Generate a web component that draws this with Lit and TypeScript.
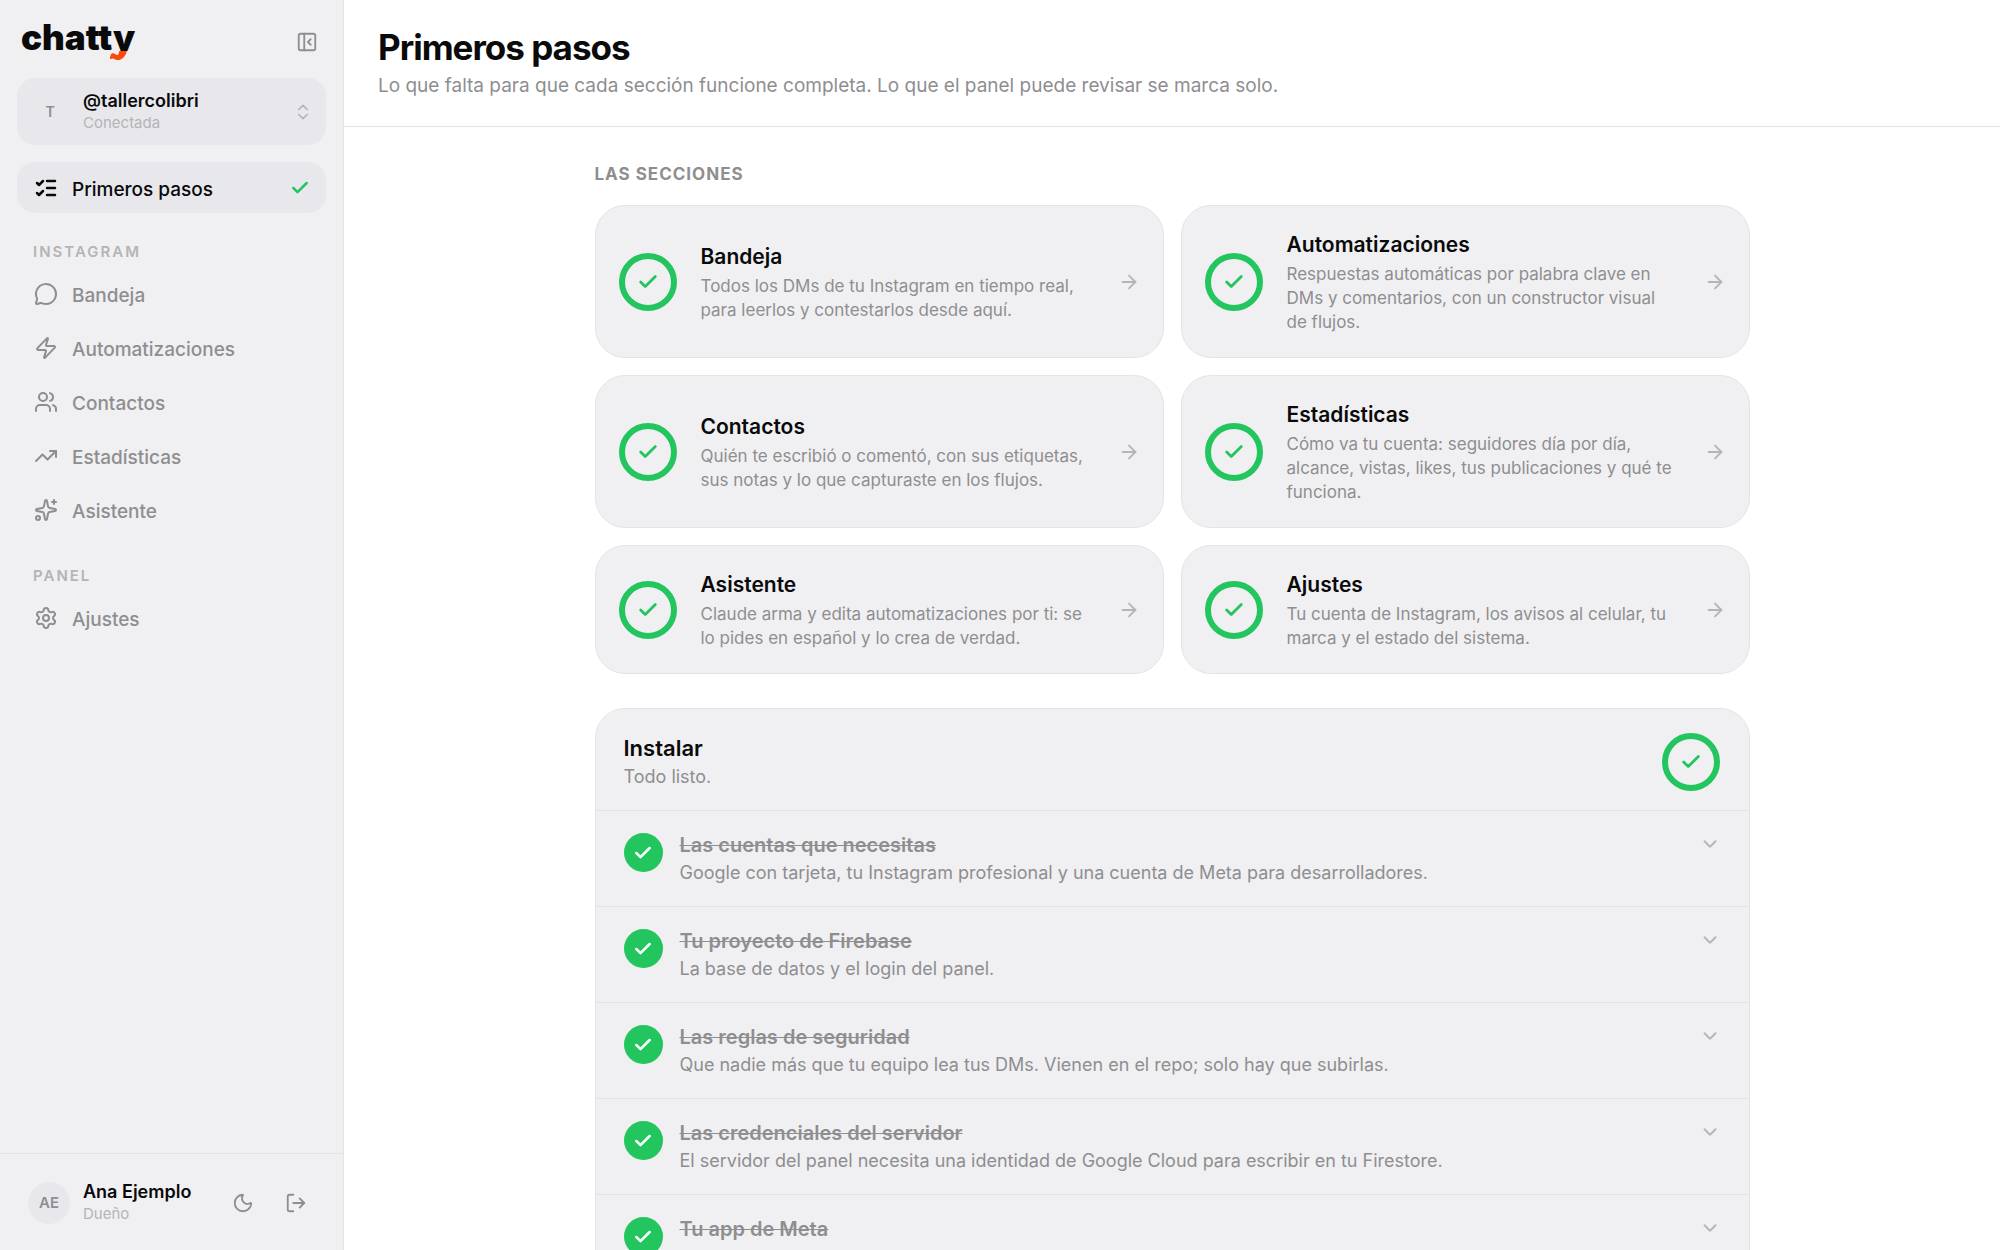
import { LitElement, html, css, svg } from "lit";
import { customElement, state } from "lit/decorators.js";

const icons = {
  panelClose: svg`<rect width="18" height="18" x="3" y="3" rx="2"/><path d="M9 3v18"/><path d="m16 15-3-3 3-3"/>`,
  upDown: svg`<path d="m7 15 5 5 5-5"/><path d="m7 9 5-5 5 5"/>`,
  checklist: svg`<path d="M13 5h8"/><path d="M13 12h8"/><path d="M13 19h8"/><path d="m3 17 2 2 4-4"/><path d="m3 7 2 2 4-4"/>`,
  check: svg`<path d="M20 6 9 17l-5-5"/>`,
  message: svg`<path d="M2.992 16.342a2 2 0 0 1 .094 1.167l-1.065 3.29a1 1 0 0 0 1.236 1.168l3.413-.998a2 2 0 0 1 1.099.092 10 10 0 1 0-4.777-4.719"/>`,
  bolt: svg`<path d="M4 14a1 1 0 0 1-.78-1.63l9.9-10.2a.5.5 0 0 1 .86.46l-1.92 6.02A1 1 0 0 0 13 10h7a1 1 0 0 1 .78 1.63l-9.9 10.2a.5.5 0 0 1-.86-.46l1.92-6.02A1 1 0 0 0 11 14z"/>`,
  users: svg`<path d="M16 21v-2a4 4 0 0 0-4-4H6a4 4 0 0 0-4 4v2"/><circle cx="9" cy="7" r="4"/><path d="M16 3.128a4 4 0 0 1 0 7.744"/><path d="M22 21v-2a4 4 0 0 0-3-3.87"/>`,
  trend: svg`<path d="M16 7h6v6"/><path d="m22 7-8.500 8.500-5-5L2 17"/>`,
  sparkles: svg`<path d="M11.017 2.814a1 1 0 0 1 1.966 0l1.051 5.558a2 2 0 0 0 1.594 1.594l5.558 1.051a1 1 0 0 1 0 1.966l-5.558 1.051a2 2 0 0 0-1.594 1.594l-1.051 5.558a1 1 0 0 1-1.966 0l-1.051-5.558a2 2 0 0 0-1.594-1.594l-5.558-1.051a1 1 0 0 1 0-1.966l5.558-1.051a2 2 0 0 0 1.594-1.594z"/><path d="M20 2v4"/><path d="M22 4h-4"/><circle cx="4" cy="20" r="2"/>`,
  gear: svg`<path d="M9.671 4.136a2.340 2.340 0 0 1 4.659 0 2.340 2.340 0 0 0 3.319 1.915 2.340 2.340 0 0 1 2.330 4.033 2.340 2.340 0 0 0 0 3.831 2.340 2.340 0 0 1-2.330 4.033 2.340 2.340 0 0 0-3.319 1.915 2.340 2.340 0 0 1-4.659 0 2.340 2.340 0 0 0-3.320-1.915 2.340 2.340 0 0 1-2.330-4.033 2.340 2.340 0 0 0 0-3.831A2.340 2.340 0 0 1 6.350 6.051a2.340 2.340 0 0 0 3.319-1.915"/><circle cx="12" cy="12" r="3"/>`,
  moon: svg`<path d="M20.985 12.486a9 9 0 1 1-9.473-9.472c.405-.022.617.460.402.803a6 6 0 0 0 8.268 8.268c.344-.215.825-.004.803.401"/>`,
  logout: svg`<path d="m16 17 5-5-5-5"/><path d="M21 12H9"/><path d="M9 21H5a2 2 0 0 1-2-2V5a2 2 0 0 1 2-2h4"/>`,
  arrow: svg`<path d="M5 12h14"/><path d="m12 5 7 7-7 7"/>`,
  down: svg`<path d="m6 9 6 6 6-6"/>`,
};
type IconName = keyof typeof icons;

const icon = (name: IconName, cls = "") =>
  html`<svg class="icon ${cls}" viewBox="0 0 24 24" aria-hidden="true">${icons[name]}</svg>`;

const ring = () => html`
  <span class="ring" role="img" aria-label="Completo">${icon("check", "i22 bold")}</span>`;

interface NavItem { label: string; icon: IconName }

const navGroups: { title: string; items: NavItem[] }[] = [
  {
    title: "Instagram",
    items: [
      { label: "Bandeja", icon: "message" },
      { label: "Automatizaciones", icon: "bolt" },
      { label: "Contactos", icon: "users" },
      { label: "Estadísticas", icon: "trend" },
      { label: "Asistente", icon: "sparkles" },
    ],
  },
  { title: "Panel", items: [{ label: "Ajustes", icon: "gear" }] },
];

const sections = [
  { title: "Bandeja", text: "Todos los DMs de tu Instagram en tiempo real, para leerlos y contestarlos desde aquí." },
  { title: "Automatizaciones", text: "Respuestas automáticas por palabra clave en DMs y comentarios, con un constructor visual de flujos." },
  { title: "Contactos", text: "Quién te escribió o comentó, con sus etiquetas, sus notas y lo que capturaste en los flujos." },
  { title: "Estadísticas", text: "Cómo va tu cuenta: seguidores día por día, alcance, vistas, likes, tus publicaciones y qué te funciona." },
  { title: "Asistente", text: "Claude arma y edita automatizaciones por ti: se lo pides en español y lo crea de verdad." },
  { title: "Ajustes", text: "Tu cuenta de Instagram, los avisos al celular, tu marca y el estado del sistema." },
];

const steps = [
  { title: "Las cuentas que necesitas", text: "Google con tarjeta, tu Instagram profesional y una cuenta de Meta para desarrolladores." },
  { title: "Tu proyecto de Firebase", text: "La base de datos y el login del panel." },
  { title: "Las reglas de seguridad", text: "Que nadie más que tu equipo lea tus DMs. Vienen en el repo; solo hay que subirlas." },
  { title: "Las credenciales del servidor", text: "El servidor del panel necesita una identidad de Google Cloud para escribir en tu Firestore." },
  { title: "Tu app de Meta", text: "" },
];

@customElement("app-root")
export class AppRoot extends LitElement {
  static styles = css`
    :host {
      --ink: #0a0a0b;
      --muted: #8e8e90;
      --faint: #b4b4b7;
      --surface: #f0f0f2;
      --raised: #e8e8ec;
      --line: #e4e4e6;
      --green: #22c55e;
      display: grid;
      grid-template-columns: 344px minmax(0, 1fr);
      height: 100vh;
      overflow: hidden;
      background: #fff;
      color: var(--ink);
      font: 400 18px/24px Inter, "Liberation Sans", sans-serif;
    }
    *, *::before { box-sizing: border-box; }
    h1, h2, h3, p, ul { margin: 0; padding: 0; }
    a { color: inherit; text-decoration: none; }
    button {
      border: 0;
      padding: 0;
      background: none;
      color: inherit;
      font: inherit;
      text-align: left;
      cursor: pointer;
    }
    .icon {
      display: block;
      flex: none;
      width: 24px;
      height: 24px;
      fill: none;
      stroke: currentColor;
      stroke-width: 2;
      stroke-linecap: round;
      stroke-linejoin: round;
    }
    .i22 { width: 22px; height: 22px; }
    .i20 { width: 20px; height: 20px; }
    .bold { stroke-width: 3; }

    .sidebar {
      display: flex;
      flex-direction: column;
      background: var(--surface);
      border-right: 1px solid var(--line);
      min-height: 0;
    }
    .brand {
      display: flex;
      align-items: center;
      justify-content: space-between;
      padding: 16px 25px 10px 20px;
    }
    .logo { display: block; width: 130px; height: 52px; }
    .logo text { font: 900 35px Inter, sans-serif; fill: url(#ink); }
    .logo .tail { fill: #fa4b0a; }
    .brand button { color: var(--muted); }
    .account {
      display: flex;
      align-items: center;
      gap: 16px;
      height: 67px;
      margin: 0 17px;
      padding: 0 13px 0 16px;
      border-radius: 18px;
      background: var(--raised);
    }
    .initial {
      width: 34px;
      text-align: center;
      color: var(--muted);
      font-size: 14px;
      font-weight: 600;
    }
    .who { flex: 1; min-width: 0; display: block; }
    .name { display: block; font-size: 18px; line-height: 23px; font-weight: 600; }
    .role { display: block; font-size: 15px; line-height: 22px; color: var(--faint); }
    .account .icon { color: var(--faint); }
    nav { flex: 1; padding: 17px 17px 0; min-height: 0; }
    .link {
      display: flex;
      align-items: center;
      gap: 14px;
      height: 51px;
      padding: 0 16px 0 17px;
      border-radius: 18px;
      color: var(--muted);
      font-size: 19px;
      font-weight: 500;
    }
    .link.active { background: var(--raised); color: var(--ink); }
    .link.active .icon:first-child { stroke-width: 2.5; }
    .link span { flex: 1; padding-top: 4px; }
    .link .done { color: var(--green); }
    .items { display: flex; flex-direction: column; gap: 3px; padding-bottom: 2px; }
    .group {
      padding: 29px 16px 6px;
      color: var(--faint);
      font-size: 15px;
      line-height: 20px;
      font-weight: 600;
      letter-spacing: 2px;
      text-transform: uppercase;
    }
    .user {
      display: flex;
      align-items: center;
      border-top: 1px solid var(--line);
      padding: 26px 36px 25px 28px;
    }
    .avatar {
      display: grid;
      place-items: center;
      width: 42px;
      height: 42px;
      margin-right: 13px;
      border-radius: 50%;
      background: var(--raised);
      color: var(--muted);
      font-size: 15px;
      font-weight: 600;
    }
    .actions { display: flex; gap: 31px; color: var(--muted); }

    main { min-width: 0; overflow: hidden; }
    header { padding: 25px 34px 26px; border-bottom: 1px solid var(--line); }
    h1 { font-size: 35px; line-height: 44px; font-weight: 700; letter-spacing: -1px; }
    header p { margin-top: 3px; font-size: 19px; line-height: 28px; color: var(--muted); }
    .content { max-width: 1155px; margin: 0 auto; padding: 35px 0 0; }
    .eyebrow {
      margin-bottom: 19px;
      color: var(--muted);
      font-size: 17px;
      line-height: 24px;
      font-weight: 700;
      letter-spacing: 1px;
      text-transform: uppercase;
    }
    .cards { display: grid; grid-template-columns: 1fr 1fr; gap: 17px; }
    .card {
      display: flex;
      align-items: center;
      gap: 24px;
      padding: 24px 23px 23px;
      border: 1px solid var(--line);
      border-radius: 30px;
      background: var(--surface);
    }
    .card .body { flex: 1; min-width: 0; }
    .go { color: var(--faint); }
    .ring {
      display: grid;
      place-items: center;
      flex: none;
      width: 58px;
      height: 58px;
      border: 6px solid var(--green);
      border-radius: 50%;
      color: var(--green);
    }
    h3 { font-size: 21px; line-height: 30px; font-weight: 600; }
    .card p { margin-top: 2px; font-size: 17px; line-height: 24px; color: var(--muted); }
    .install {
      margin-top: 34px;
      border: 1px solid var(--line);
      border-radius: 30px 30px 0 0;
      background: var(--surface);
    }
    .top {
      display: flex;
      align-items: center;
      justify-content: space-between;
      padding: 24px 29px 19px 28px;
    }
    .top h2 { font-size: 22px; line-height: 30px; font-weight: 600; }
    .top p, .step .text { font-size: 18px; line-height: 28px; color: var(--muted); }
    .step {
      display: flex;
      align-items: flex-start;
      gap: 17px;
      width: 100%;
      padding: 20px 28px 19px;
      border-top: 1px solid var(--line);
    }
    .dot {
      display: grid;
      place-items: center;
      flex: none;
      width: 39px;
      height: 39px;
      margin-top: 2px;
      border-radius: 50%;
      background: var(--green);
      color: #fff;
    }
    .step .body { flex: 1; }
    .step .title {
      display: block;
      color: var(--muted);
      font-size: 20px;
      line-height: 28px;
      font-weight: 600;
      text-decoration: line-through;
      text-decoration-thickness: 1px;
    }
    .step .text { display: block; }
    .step .chev { color: var(--faint); margin-top: 2px; }
  `;

  @state() private current = "Primeros pasos";

  private go(label: string) {
    return (e: Event) => {
      e.preventDefault();
      this.current = label;
    };
  }

  private link(item: NavItem, done = false) {
    const active = this.current === item.label;
    return html`
      <a class="link ${active ? "active" : ""}" href="#${item.label}" @click=${this.go(item.label)}>
        ${icon(item.icon)}<span>${item.label}</span>
        ${done ? icon("check", "i20 bold done") : ""}
      </a>`;
  }

  render() {
    return html`
      <aside class="sidebar">
        <div class="brand">
          <svg class="logo" viewBox="0 0 130 52" role="img" aria-label="chatty">
            <defs>
              <linearGradient id="ink" gradientUnits="userSpaceOnUse" x1="0" y1="0" x2="0" y2="52">
                <stop offset="0.67" stop-color="#0a0a0b"/>
                <stop offset="0.67" stop-color="#0a0a0b" stop-opacity="0"/>
              </linearGradient>
            </defs>
            <text x="1" y="34">chatty</text>
            <path class="tail" d="M90 43.300C89.800 40 91 37.300 93 37.300c1.800 0 2.600 1.700 4.300 1.700 1.200 0 1.500-1.800 2-4h7.600c-.6 2.500-1.400 4.200-2.900 5.900-1.700 2-4.200 3.200-6.700 3.100-2.200 0-3-1.500-4.500-1.500-1 0-2 .3-2.800.8z"/>
          </svg>
          <button aria-label="Contraer menú">${icon("panelClose", "i22")}</button>
        </div>
        <button class="account">
          <span class="initial">T</span>
          <span class="who">
            <span class="name">@tallercolibri</span>
            <span class="role">Conectada</span>
          </span>
          ${icon("upDown", "i20")}
        </button>
        <nav>
          ${this.link({ label: "Primeros pasos", icon: "checklist" }, true)}
          ${navGroups.map((g) => html`
            <div class="group">${g.title}</div>
            <div class="items">${g.items.map((i) => this.link(i))}</div>`)}
        </nav>
        <div class="user">
          <span class="avatar">AE</span>
          <span class="who">
            <span class="name">Ana Ejemplo</span>
            <span class="role">Dueño</span>
          </span>
          <span class="actions">
            <button aria-label="Modo oscuro">${icon("moon", "i22")}</button>
            <button aria-label="Cerrar sesión">${icon("logout", "i22")}</button>
          </span>
        </div>
      </aside>
      <main>
        <header>
          <h1>Primeros pasos</h1>
          <p>Lo que falta para que cada sección funcione completa. Lo que el panel puede revisar se marca solo.</p>
        </header>
        <div class="content">
          <h2 class="eyebrow">Las secciones</h2>
          <div class="cards">
            ${sections.map((s) => html`
              <a class="card" href="#${s.title}">
                ${ring()}
                <div class="body"><h3>${s.title}</h3><p>${s.text}</p></div>
                <span class="go">${icon("arrow", "i22")}</span>
              </a>`)}
          </div>
          <section class="install">
            <div class="top">
              <div><h2>Instalar</h2><p>Todo listo.</p></div>
              ${ring()}
            </div>
            ${steps.map((s) => html`
              <button class="step" aria-expanded="false">
                <span class="dot">${icon("check", "i20 bold")}</span>
                <span class="body">
                  <span class="title">${s.title}</span>
                  <span class="text">${s.text}</span>
                </span>
                ${icon("down", "i22 chev")}
              </button>`)}
          </section>
        </div>
      </main>`;
  }
}
